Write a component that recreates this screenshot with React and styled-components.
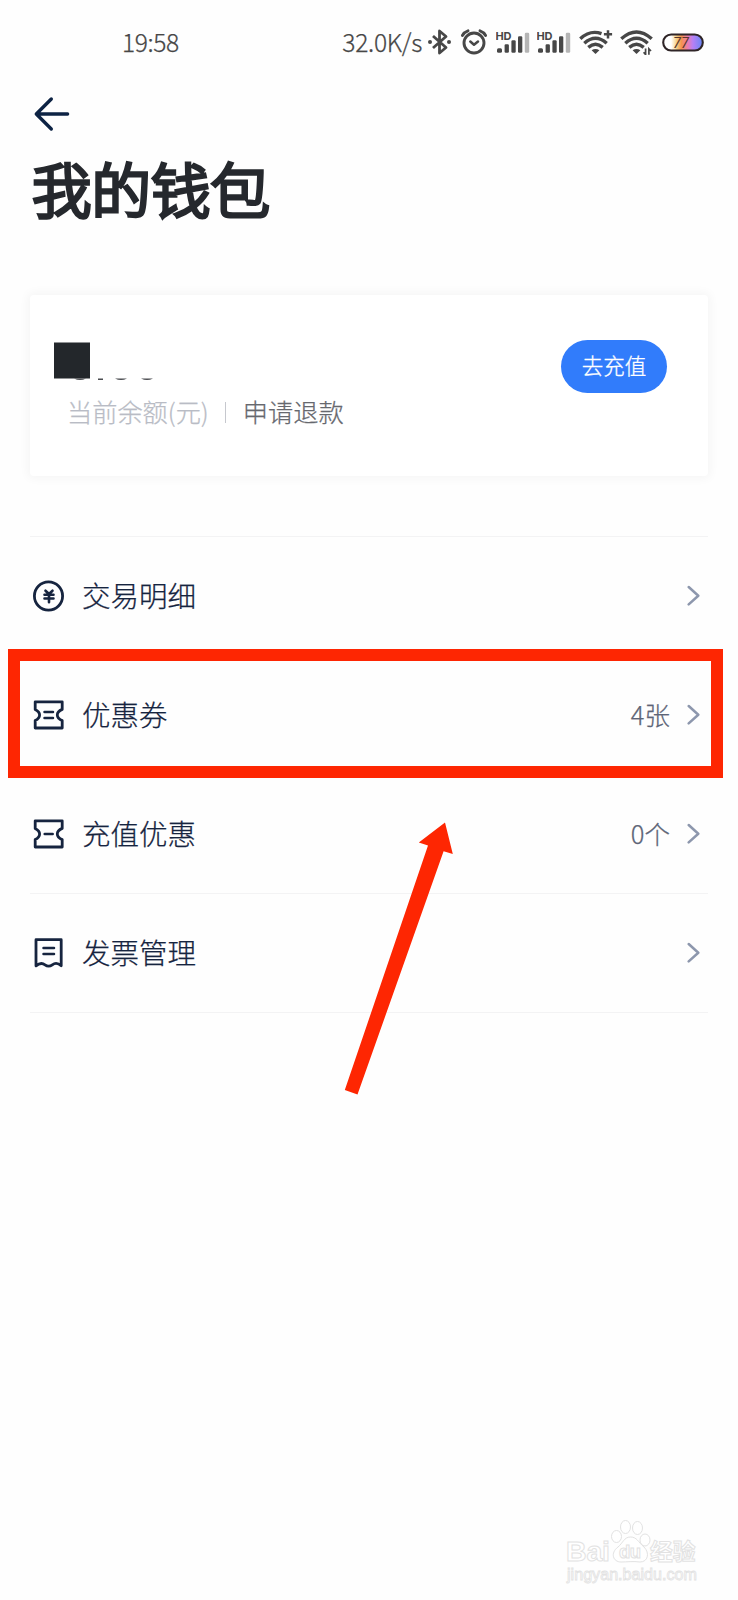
import React from "react";
import styled, { createGlobalStyle } from "styled-components";

const GlobalStyle = createGlobalStyle`
  * {
    box-sizing: border-box;
  }
  body {
    margin: 0;
    background: #fefefe;
    font-family: "Noto Sans CJK SC", "Noto Sans", sans-serif;
  }
  svg {
    display: block;
    flex-shrink: 0;
  }
`;

const Page = styled.div`
  position: relative;
  width: 738px;
  height: 1600px;
  overflow: hidden;
  background: #fefefe;
  -webkit-text-stroke: 0.25px currentColor;
`;

const StatusBar = styled.div`
  display: flex;
  align-items: center;
  justify-content: space-between;
  height: 84px;
  padding: 0 34px 0 122px;
  color: #474747;
`;

const StatusText = styled.span`
  padding-bottom: 2px;
  font-size: 24.6px;
  font-weight: 300;
  line-height: 36px;
  letter-spacing: ${(p) => p.$spacing || "0"};
  white-space: nowrap;
`;

const StatusIcons = styled.div`
  display: flex;
  align-items: center;
`;

const IconSlot = styled.span`
  margin-left: ${(p) => p.$gap}px;
`;

const Header = styled.header`
  display: flex;
  flex-direction: column;
  align-items: flex-start;
  height: 211px;
  padding: 12px 30px 0;
`;

const Title = styled.h1`
  margin: 11px 0 0 2px;
  font-size: 59.5px;
  font-weight: 300;
  line-height: 88px;
  color: #25282d;
  -webkit-text-stroke: 3.7px #25282d;
  stroke-linejoin: round;
`;

const Card = styled.section`
  display: flex;
  justify-content: space-between;
  width: 678px;
  height: 181px;
  margin-left: 30px;
  padding: 45px 41px 0 24px;
  border-radius: 4px;
  background: #fff;
  box-shadow: 0 0 10px 3px rgba(0, 0, 0, 0.035);
`;

const Balance = styled.div`
  display: flex;
  flex-direction: column;
`;

const BalanceLine = styled.div`
  display: flex;
  align-items: center;
  margin: 10px 0 0 13px;
  font-size: 25.2px;
  font-weight: 300;
  line-height: 36px;
  color: #b9bcc5;
`;

const Divider = styled.i`
  width: 1px;
  height: 21px;
  margin: 2px 17px 0 16px;
  background: #c6c8ce;
`;

const Refund = styled.span`
  color: #66686e;
`;

const TopUp = styled.button`
  width: 106px;
  height: 53px;
  padding: 0 0 3px;
  border: 0;
  border-radius: 27px;
  background: #317cfb;
  color: #fff;
  font-family: inherit;
  font-size: 21.5px;
  font-weight: 300;
  line-height: 50px;
  -webkit-text-stroke: 0.3px #fff;
`;

const Menu = styled.ul`
  list-style: none;
  width: 678px;
  margin: 60px 0 0 30px;
  padding: 0;
  border-top: 1px solid #f3f3f4;
`;

const MenuRow = styled.li`
  display: flex;
  align-items: center;
  height: 119px;
  padding: 0 7px 0 3px;
  border-bottom: 1px solid #f3f3f4;
`;

const Label = styled.span`
  flex: 1;
  margin: -3px 0 0 18px;
  font-size: 28.5px;
  font-weight: 300;
  line-height: 40px;
  color: #16243f;
`;

const Count = styled.span`
  margin: -3px 17px 0 0;
  font-size: 25.5px;
  font-weight: 300;
  line-height: 40px;
  color: #5d6577;
`;

const Highlight = styled.div`
  position: absolute;
  left: 7.5px;
  top: 649px;
  width: 715px;
  height: 128.5px;
  border: 12px solid #fe2602;
`;

const Pointer = styled.svg`
  position: absolute;
  left: 340px;
  top: 815px;
`;

const Watermark = styled.svg`
  position: absolute;
  left: 560px;
  top: 1515px;
  font-family: "Liberation Sans", "Noto Sans CJK SC", sans-serif;
  -webkit-text-stroke: 0;
`;

const Bluetooth = () => (
  <svg width="26" height="28" viewBox="0 0 26 28" fill="none" stroke="#474747" strokeWidth="2.8" strokeLinejoin="round">
    <path d="M6 8 L19 19.5 L12.5 25 V3 L19 8.5 L6 20" />
    <circle cx="3" cy="14" r="2" fill="#474747" stroke="none" />
    <circle cx="22" cy="14" r="2" fill="#474747" stroke="none" />
  </svg>
);

const Alarm = () => (
  <svg width="28" height="28" viewBox="0 0 28 28" fill="none" stroke="#474747" strokeWidth="2.9" strokeLinecap="round">
    <circle cx="14" cy="15" r="10" />
    <path d="M2.4 7.5 Q4.3 4 8 2.8 M25.6 7.5 Q23.7 4 20 2.8" />
    <path d="M10.3 13.5 L14 16.7 L18 13.5" strokeLinejoin="round" strokeWidth="2.5" />
  </svg>
);

const Signal = () => (
  <svg width="34" height="26" viewBox="0 0 34 26" fill="#474747">
    <text x="-0.6" y="11" fontFamily="Inter, sans-serif" fontWeight="700" fontSize="11">HD</text>
    <rect x="1" y="19.3" width="5" height="4.5" rx="1.5" />
    <rect x="8.6" y="15.3" width="4.3" height="8.5" rx="1.2" />
    <rect x="15.4" y="11.3" width="4.3" height="12.5" rx="1.2" />
    <rect x="22" y="7.3" width="4.3" height="16.5" rx="1.2" />
    <rect x="28.8" y="3.7" width="4.4" height="20.1" rx="1.2" fill="#b5b5b5" />
  </svg>
);

const Wifi = ({ plus }) => (
  <svg width="35" height="26" viewBox="0 0 35 26" fill="none" stroke="#474747" strokeWidth="3.4">
    <path d={plus ? "M1.3 9.8 Q11 .6 22.5 4.6" : "M1.3 9.8 Q16.5 -3.9 31.7 9.8"} />
    <path d="M5.3 14.2 Q16.5 4.2 27.7 14.2" />
    <path d="M9.3 18.4 Q16.5 12.2 23.7 18.4" />
    <path d="M12.6 21.2 Q16.5 18.6 20.4 21.2 L16.5 25 Z" fill="#474747" stroke="none" />
    {plus ? (
      <path d="M29 1.2 V9.4 M24.9 5.3 H33.1" strokeWidth="2.5" />
    ) : (
      <path d="M25.6 19.4 V25.6 L23.6 23.2 M28.9 25.8 V19.8 L31 22" strokeWidth="1.7" />
    )}
  </svg>
);

const Battery = () => (
  <svg width="42" height="20" viewBox="0 0 42 20">
    <defs>
      <linearGradient id="charge" x1="0" x2="1" y1="0" y2="0">
        <stop offset="0.2" stopColor="#fff" />
        <stop offset="0.34" stopColor="#f5cf83" />
        <stop offset="0.46" stopColor="#f6934f" />
        <stop offset="0.62" stopColor="#eb7cb0" />
        <stop offset="0.75" stopColor="#b780f5" />
        <stop offset="1" stopColor="#6488f5" />
      </linearGradient>
    </defs>
    <rect x="1.2" y="2.5" width="39.6" height="16" rx="8" fill="url(#charge)" stroke="#2f2527" strokeWidth="2.1" />
    <text x="11" y="15.8" fontFamily="Roboto, sans-serif" fontStyle="italic" fontSize="14.5" fill="#5a372b">77</text>
  </svg>
);

const BackArrow = () => (
  <svg width="44" height="36" viewBox="0 0 44 36" fill="none" stroke="#0d2344" strokeWidth="3.4" strokeLinecap="round" strokeLinejoin="round">
    <path d="M21.3 3 L6.3 18 L21.3 33 M6.3 18 H37.6" />
  </svg>
);

const icon = {
  width: 31,
  height: 32,
  viewBox: "0 0 31 32",
  fill: "none",
  stroke: "#16243f",
  strokeWidth: 2.8,
  strokeLinejoin: "round",
  strokeLinecap: "round",
};

const YenIcon = () => (
  <svg {...icon}>
    <circle cx="15.5" cy="16" r="14.1" />
    <path d="M12.5 10.7 L16 14 L19.5 10.7 M11.5 14.8 H20.5 M11.5 18.5 H20.5 M16 14.3 V22.3" strokeWidth="2.6" />
  </svg>
);

const TicketIcon = ({ lines }) => (
  <svg {...icon}>
    <path d="M2.2 2.8 H29.2 V10.4 C25.5 12 24.3 13.8 24.3 16 C24.3 18.2 25.5 20 29.2 21.6 V29 H2.2 V21.6 C5.4 20 6.6 18.2 6.6 16 C6.6 13.8 5.4 12 2.2 10.4 Z" />
    <path d={lines === 2 ? "M11.5 13 H20 M11.5 19 H20" : "M11.7 16 H19.7"} strokeWidth="2.5" />
  </svg>
);

const InvoiceIcon = () => (
  <svg {...icon}>
    <path d="M3 2.7 H28.2 V28.8 C25 25.9 21.7 26 19.3 27.8 Q15.6 30.5 12 27.8 C9.7 26 6.5 25.9 3 28.8 Z" />
    <path d="M10.5 11 H21 M10.5 17 H21" strokeWidth="2.5" />
  </svg>
);

const Chevron = () => (
  <svg width="14" height="22" viewBox="0 0 14 22" fill="none" stroke="#8d97ad" strokeWidth="2.5" strokeLinecap="round" strokeLinejoin="round">
    <path d="M1.7 2 L11.3 10.7 L1.7 19.4" />
  </svg>
);

const rows = [
  { label: "交易明细", icon: <YenIcon /> },
  { label: "优惠券", icon: <TicketIcon lines={2} />, count: "4张" },
  { label: "充值优惠", icon: <TicketIcon lines={1} />, count: "0个" },
  { label: "发票管理", icon: <InvoiceIcon /> },
];

const App = () => {
  return (
    <Page>
      <GlobalStyle />
      <StatusBar>
        <StatusText $spacing="-0.4px">19:58</StatusText>
        <StatusIcons>
          <StatusText $spacing="-0.3px">32.0K/s</StatusText>
          <IconSlot $gap={5}><Bluetooth /></IconSlot>
          <IconSlot $gap={7}><Alarm /></IconSlot>
          <IconSlot $gap={8}><Signal /></IconSlot>
          <IconSlot $gap={7}><Signal /></IconSlot>
          <IconSlot $gap={8}><Wifi plus /></IconSlot>
          <IconSlot $gap={6}><Wifi /></IconSlot>
          <IconSlot $gap={7}><Battery /></IconSlot>
        </StatusIcons>
      </StatusBar>

      <Header>
        <BackArrow />
        <Title>我的钱包</Title>
      </Header>

      <Card>
        <Balance>
          {/* amount is blocked out, only the lower edge of the digits shows */}
          <svg width="110" height="43" viewBox="0 0 110 43">
            <rect x="0" y="2.5" width="36" height="36" fill="#23272b" />
            <g fill="#4b4d51">
              <path d="M20 38.5 H32 Q26 41.5 20 38.5 Z" />
              <rect x="44" y="38.5" width="5" height="1.5" />
              <path d="M61 38.5 H73 Q67 41.5 61 38.5 Z" />
              <path d="M87 38.5 H99 Q93 41.5 87 38.5 Z" />
            </g>
          </svg>
          <BalanceLine>
            当前余额(元)
            <Divider />
            <Refund>申请退款</Refund>
          </BalanceLine>
        </Balance>
        <TopUp>去充值</TopUp>
      </Card>

      <Menu>
        {rows.map((row) => (
          <MenuRow key={row.label}>
            {row.icon}
            <Label>{row.label}</Label>
            {row.count && <Count>{row.count}</Count>}
            <Chevron />
          </MenuRow>
        ))}
      </Menu>

      <Highlight />
      <Pointer width="120" height="285" viewBox="340 815 120 285">
        <path d="M445 822.5 L418.8 842.5 L428 845.5 L344.8 1090 L357.5 1094.6 L443.6 851.2 L452.8 854 Z" fill="#fe2602" />
      </Pointer>

      <Watermark width="150" height="75" viewBox="560 1515 150 75" fill="#fff" stroke="#e2e2e2" strokeWidth="1">
        <text x="566" y="1560.5" fontSize="28.5" fontWeight="700" textLength="44">Bai</text>
        <ellipse cx="616.5" cy="1536.5" rx="5" ry="6" />
        <ellipse cx="625.5" cy="1527" rx="5" ry="6.5" />
        <ellipse cx="637.5" cy="1528" rx="5" ry="6.5" />
        <ellipse cx="645" cy="1540" rx="5" ry="6" />
        <path d="M630.5 1537 C624 1537 623 1543 618 1547 C610 1553 613 1562 621 1562 C627 1562 633 1561 640 1562 C648 1562 650 1553 644 1547 C638 1542 637 1537 630.5 1537 Z" />
        <text x="619" y="1557.5" fontSize="18.5" fontWeight="700" textLength="22">du</text>
        <text x="650" y="1559.5" fontSize="22.8" fontWeight="700">经验</text>
        <text x="567" y="1579.5" fontSize="15.8" textLength="130" lengthAdjust="spacingAndGlyphs" strokeWidth="0.8">jingyan.baidu.com</text>
      </Watermark>
    </Page>
  );
};

export default App;
